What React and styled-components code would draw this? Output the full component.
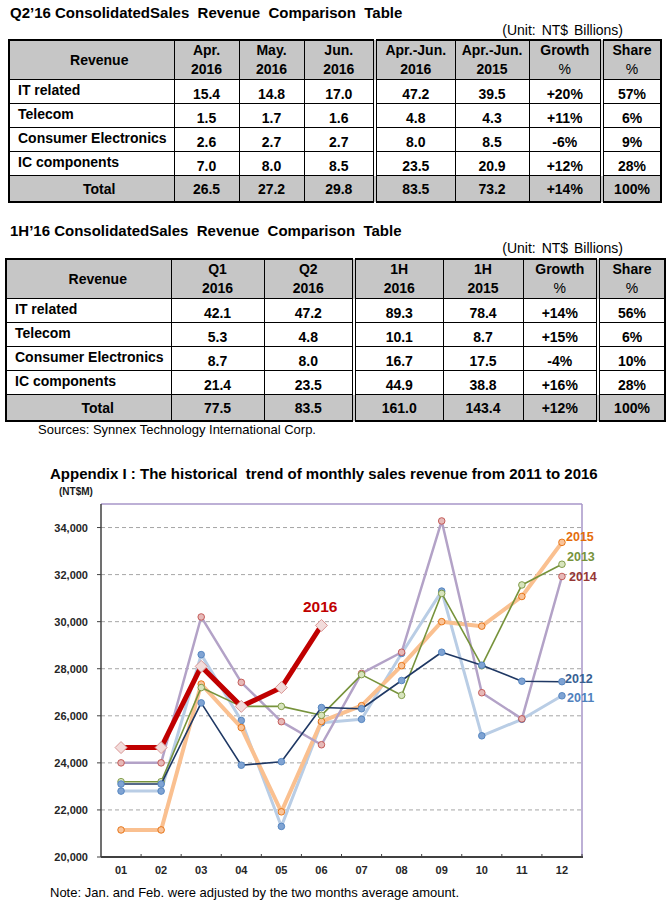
import React from 'react';
import styled, { createGlobalStyle } from 'styled-components';

const GlobalStyle = createGlobalStyle`
  html, body { margin: 0; padding: 0; background: #fff; }
  body { font-family: "Liberation Sans", Arial, sans-serif; color: #000; }
`;

const Page = styled.div`
  width: 669px;
  height: 915px;
  overflow: hidden;
  display: flex;
  flex-direction: column;
`;

const TableTitle = styled.div`
  margin-top: ${p => p.$top}px;
  padding-left: 10px;
  height: 18px;
  line-height: 18px;
  font-size: 15px;
  font-weight: bold;
  white-space: pre;
`;

const Unit = styled.div`
  align-self: flex-end;
  padding-right: 46px;
  height: 17px;
  line-height: 17px;
  font-size: 14px;
  word-spacing: 2px;
`;

const Table = styled.table`
  margin-top: ${p => p.$top}px;
  margin-left: ${p => p.$left}px;
  width: ${p => p.$width}px;
  table-layout: fixed;
  border-collapse: collapse;
  border: 2px solid #000;
  font-size: 14px;
  font-weight: bold;
`;

const HeadCell = styled.th`
  height: 38px;
  padding: 0;
  padding-left: ${p => p.$pad || 0}px;
  background: #c6c6c6;
  border: 1px solid #000;
  ${p => p.$double && 'border-left: 4px double #000;'}
  line-height: 19px;
  text-align: center;
  vertical-align: middle;
`;

const Thin = styled.span`
  font-weight: normal;
`;

const LabelCell = styled.td`
  height: 21px;
  padding: 2px 0 0 8px;
  border: 1px solid #000;
  line-height: 16px;
  text-align: left;
  vertical-align: top;
  white-space: nowrap;
`;

const NumCell = styled.td`
  padding: 0 0 1px;
  border: 1px solid #000;
  ${p => p.$double && 'border-left: 4px double #000;'}
  line-height: 16px;
  text-align: center;
  vertical-align: bottom;
`;

const TotalRow = styled.tr`
  background: #c6c6c6;
`;

const TotalCell = styled.td`
  height: 25px;
  padding: 0;
  padding-left: ${p => p.$pad || 0}px;
  border: 1px solid #000;
  ${p => p.$double && 'border-left: 4px double #000;'}
  text-align: center;
  vertical-align: middle;
`;

const Sources = styled.div`
  padding-left: 38px;
  height: 16px;
  line-height: 16px;
  font-size: 13px;
`;

const ChartTitle = styled.div`
  margin-top: 27px;
  padding-left: 50px;
  height: 18px;
  line-height: 18px;
  font-size: 15px;
  font-weight: bold;
  white-space: pre;
`;

const ChartBox = styled.svg`
  display: block;
  width: 669px;
  height: 400px;
  font-family: "Liberation Sans", Arial, sans-serif;
`;

const Note = styled.div`
  margin-top: 2px;
  padding-left: 50px;
  height: 16px;
  line-height: 16px;
  font-size: 13px;
`;

const q2 = {
  title: 'Q2’16 ConsolidatedSales  Revenue  Comparison  Table',
  cols: [165, 65, 65, 71, 80, 74, 73, 59],
  left: 8,
  pad: 15,
  doubles: [3, 6],
  heads: [['Apr.', '2016'], ['May.', '2016'], ['Jun.', '2016'], ['Apr.-Jun.', '2016'], ['Apr.-Jun.', '2015'], ['Growth', '%'], ['Share', '%']],
  rows: [
    ['IT related', '15.4', '14.8', '17.0', '47.2', '39.5', '+20%', '57%'],
    ['Telecom', '1.5', '1.7', '1.6', '4.8', '4.3', '+11%', '6%'],
    ['Consumer Electronics', '2.6', '2.7', '2.7', '8.0', '8.5', '-6%', '9%'],
    ['IC components', '7.0', '8.0', '8.5', '23.5', '20.9', '+12%', '28%'],
  ],
  total: ['Total', '26.5', '27.2', '29.8', '83.5', '73.2', '+14%', '100%'],
};

const h1 = {
  title: '1H’16 ConsolidatedSales  Revenue  Comparison  Table',
  cols: [165, 93, 90, 89, 80, 75, 67],
  left: 5,
  pad: 18,
  doubles: [2, 5],
  heads: [['Q1', '2016'], ['Q2', '2016'], ['1H', '2016'], ['1H', '2015'], ['Growth', '%'], ['Share', '%']],
  rows: [
    ['IT related', '42.1', '47.2', '89.3', '78.4', '+14%', '56%'],
    ['Telecom', '5.3', '4.8', '10.1', '8.7', '+15%', '6%'],
    ['Consumer Electronics', '8.7', '8.0', '16.7', '17.5', '-4%', '10%'],
    ['IC components', '21.4', '23.5', '44.9', '38.8', '+16%', '28%'],
  ],
  total: ['Total', '77.5', '83.5', '161.0', '143.4', '+12%', '100%'],
};

const RevenueTable = ({ data, top }) => {
  const width = data.cols.reduce((a, b) => a + b, 0);
  const isDouble = i => data.doubles.includes(i);
  return (
    <Table $left={data.left} $top={top} $width={width}>
      <colgroup>
        {data.cols.map((w, i) => <col key={i} style={{ width: w }} />)}
      </colgroup>
      <thead>
        <tr>
          <HeadCell $pad={data.pad}>Revenue</HeadCell>
          {data.heads.map(([a, b], i) => (
            <HeadCell key={i} $double={isDouble(i)}>
              {a}<br />{b === '%' ? <Thin>%</Thin> : b}
            </HeadCell>
          ))}
        </tr>
      </thead>
      <tbody>
        {data.rows.map(([label, ...nums]) => (
          <tr key={label}>
            <LabelCell>{label}</LabelCell>
            {nums.map((n, i) => <NumCell key={i} $double={isDouble(i)}>{n}</NumCell>)}
          </tr>
        ))}
        <TotalRow>
          <TotalCell $pad={data.pad}>{data.total[0]}</TotalCell>
          {data.total.slice(1).map((n, i) => <TotalCell key={i} $double={isDouble(i)}>{n}</TotalCell>)}
        </TotalRow>
      </tbody>
    </Table>
  );
};

// chart geometry (svg coords; svg top sits at page y 483)
const PL = 101, PR = 582, PT = 21, PB = 374;
const X = i => PL + (i + 0.5) * ((PR - PL) / 12);
const Y = v => PB - (v - 20000) * (PB - PT) / 15000;

const series = [
  { year: '2011', line: '#b9cde5', w: 3, fill: '#7fa3d3', stroke: '#4f81bd',
    data: [22800, 22800, 28600, 25800, 21300, 25700, 25850, 28650, 31300, 25150, 25850, 26850] },
  { year: '2015', line: '#fac090', w: 4, fill: '#f9c49a', stroke: '#e46c0a',
    data: [21150, 21150, 27350, 25500, 21920, 25760, 26430, 28130, 30000, 29810, 31070, 33370] },
  { year: '2014', line: '#b3a2c7', w: 2.5, fill: '#e6b9b8', stroke: '#c0504d',
    data: [24000, 24000, 30200, 27420, 25750, 24770, 27800, 28700, 34280, 26980, 25870, 31920] },
  { year: '2013', line: '#77933c', w: 1.6, fill: '#d7e4bd', stroke: '#77933c',
    data: [23200, 23200, 27200, 26400, 26400, 26020, 27750, 26870, 31200, 28130, 31560, 32440] },
  { year: '2012', line: '#1f3864', w: 1.6, fill: '#7fa3d3', stroke: '#4f81bd',
    data: [23100, 23100, 26550, 23900, 24050, 26350, 26300, 27500, 28700, 28150, 27470, 27450] },
];

const red = [24650, 24650, 28100, 26400, 27200, 29840];

const labels = [
  { t: '2015', x: 566, y: 58, c: '#e46c0a' },
  { t: '2013', x: 567, y: 78, c: '#77933c' },
  { t: '2014', x: 569, y: 98, c: '#953735' },
  { t: '2012', x: 565, y: 200, c: '#376092' },
  { t: '2011', x: 567, y: 219, c: '#4f81bd' },
];

const pts = data => data.map((v, i) => `${X(i)},${Y(v)}`).join(' ');

const TrendChart = () => {
  const grid = [22000, 24000, 26000, 28000, 30000, 32000, 34000];
  const ticks = [20000, ...grid];
  return (
    <ChartBox viewBox="0 0 669 400">
      <text x="59" y="12" fontSize="10" fontWeight="bold" fill="#1a1a1a">(NT$M)</text>
      {grid.map(v => (
        <line key={v} x1={PL} x2={PR} y1={Y(v)} y2={Y(v)} stroke="#a6a6a6" strokeDasharray="4 3" />
      ))}
      {ticks.map(v => (
        <g key={v}>
          <line x1={PL - 4} x2={PL} y1={Y(v)} y2={Y(v)} stroke="#404040" />
          <text x="88" y={Y(v) + 4} textAnchor="end" fontSize="11" fontWeight="bold" fill="#262626">
            {v.toLocaleString('en-US')}
          </text>
        </g>
      ))}
      <line x1={PL} x2={PR} y1={PT} y2={PT} stroke="#a796c8" strokeWidth="1.5" />
      <line x1={PR} x2={PR} y1={PT} y2={PB} stroke="#a796c8" strokeWidth="1.5" />
      <line x1={PL} x2={PL} y1={PT} y2={PB} stroke="#404040" strokeWidth="1.5" />
      <line x1={PL} x2={PR + 1} y1={PB} y2={PB} stroke="#404040" strokeWidth="2" />
      {Array.from({ length: 12 }, (_, k) => {
        const x = PL + (k + 1) * ((PR - PL) / 12);
        return <line key={k} x1={x} x2={x} y1={PB - 3} y2={PB} stroke="#404040" />;
      })}
      {Array.from({ length: 12 }, (_, i) => (
        <text key={i} x={X(i)} y={PB + 17} textAnchor="middle" fontSize="11" fontWeight="bold" fill="#262626">
          {String(i + 1).padStart(2, '0')}
        </text>
      ))}

      {series.map(s => (
        <g key={s.year}>
          <polyline points={pts(s.data)} fill="none" stroke={s.line} strokeWidth={s.w} strokeLinejoin="round" />
          {s.data.map((v, i) => (
            <circle key={i} cx={X(i)} cy={Y(v)} r="3.3" fill={s.fill} stroke={s.stroke} strokeWidth="0.9" />
          ))}
        </g>
      ))}

      <polyline points={pts(red)} fill="none" stroke="#c00000" strokeWidth="5" strokeLinejoin="round" />
      {red.map((v, i) => {
        const x = X(i), y = Y(v);
        return (
          <polygon key={i} points={`${x},${y - 6} ${x + 6},${y} ${x},${y + 6} ${x - 6},${y}`}
            fill="#f2dcdb" stroke="#d99694" strokeWidth="1" />
        );
      })}

      <text x="303" y="129" fontSize="15.5" fontWeight="bold" fill="#c00000">2016</text>
      {labels.map(l => (
        <text key={l.t} x={l.x} y={l.y} fontSize="12.5" fontWeight="bold" fill={l.c}>{l.t}</text>
      ))}
    </ChartBox>
  );
};

export default function App() {
  return (
    <Page>
      <GlobalStyle />
      <TableTitle $top={4}>{q2.title}</TableTitle>
      <Unit>(Unit: NT$ Billions)</Unit>
      <RevenueTable data={q2} top={0} />
      <TableTitle $top={19}>{h1.title}</TableTitle>
      <Unit>(Unit: NT$ Billions)</Unit>
      <RevenueTable data={h1} top={1} />
      <Sources>Sources: Synnex Technology International Corp.</Sources>
      <ChartTitle>Appendix I : The historical  trend of monthly sales revenue from 2011 to 2016</ChartTitle>
      <TrendChart />
      <Note>Note: Jan. and Feb. were adjusted by the two months average amount.</Note>
    </Page>
  );
}
